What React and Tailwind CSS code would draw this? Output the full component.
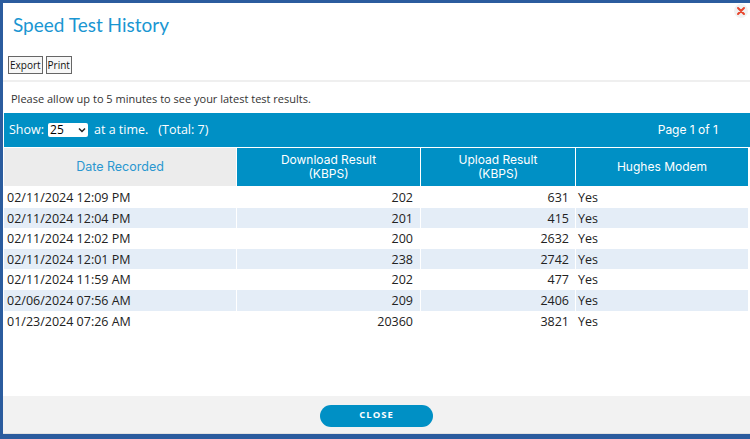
import React from "react";

const rows = [
  ["02/11/2024 12:09 PM", "202", "631", "Yes"],
  ["02/11/2024 12:04 PM", "201", "415", "Yes"],
  ["02/11/2024 12:02 PM", "200", "2632", "Yes"],
  ["02/11/2024 12:01 PM", "238", "2742", "Yes"],
  ["02/11/2024 11:59 AM", "202", "477", "Yes"],
  ["02/06/2024 07:56 AM", "209", "2406", "Yes"],
  ["01/23/2024 07:26 AM", "20360", "3821", "Yes"],
];

const head = { fontFamily: "Inter, 'Open Sans', sans-serif" };

export default function App() {
  return (
    <div
      className="w-[750px] h-[439px] bg-[#2b5c9e] pt-[3px] pl-[3px] pb-[5px] overflow-hidden"
      style={{ fontFamily: "'Open Sans', sans-serif" }}
    >
      <div className="relative h-full bg-white flex flex-col">
        <button className="absolute right-[2px] top-[1px] w-[14px] h-[14px] rounded-full bg-[#f1f1f1] flex items-center justify-center">
          <svg width="10" height="10" viewBox="0 0 10 10">
            <path d="M2 2L8 8M8 2L2 8" stroke="#e8452c" strokeWidth="2" strokeLinecap="round" />
          </svg>
        </button>
        <div className="h-[79px] border-b-2 border-[#efefef] flex flex-col">
          <h1
            className="pl-[10px] pt-[9px] text-[19px] leading-[26px] text-[#1a96d2] font-normal"
            style={{ fontFamily: "Lato, 'Open Sans', sans-serif" }}
          >
            Speed Test History
          </h1>
          <div className="flex gap-[3px] pl-[5px] mt-[18px]">
            <button className="h-[18px] px-px border border-[#666] bg-[#f7f7f7] text-[10px] leading-[16px] text-[#111]">
              Export
            </button>
            <button className="h-[18px] px-px border border-[#666] bg-[#f7f7f7] text-[10px] leading-[16px] text-[#111]">
              Print
            </button>
          </div>
        </div>
        <p className="pl-[8px] pt-[8px] text-[11px] leading-[17px] text-[#333]">
          Please allow up to 5 minutes to see your latest test results.
        </p>
        <div className="mt-[6px] ml-[1px] h-[34px] bg-[#0090c5] flex items-center justify-between pl-[5px] pr-[32px] text-white text-[12.5px]">
          <div className="flex items-center">
            <span>Show:</span>
            <div className="ml-[4px] w-[40px] h-[14px] bg-white rounded-[2px] flex items-center justify-between px-[2px] text-black text-[12px] leading-[14px]">
              <span>25</span>
              <svg width="8" height="6" viewBox="0 0 8 6">
                <path d="M1 1.5L4 4.5L7 1.5" fill="none" stroke="#222" strokeWidth="1.5" />
              </svg>
            </div>
            <span className="ml-[6px]">at a time.</span>
            <span className="ml-[10px]">(Total: 7)</span>
          </div>
          <span style={head} className="text-[12px]">Page 1 of 1</span>
        </div>
        <div className="mt-px ml-px grid grid-cols-[232px_183px_154px_172px] gap-x-px">
          <div className="h-[38px] bg-[#ececec] flex items-center justify-center text-[12.5px] text-[#2a97d0]" style={head}>
            Date Recorded
          </div>
          <div className="h-[38px] bg-[#0090c5] flex flex-col items-center justify-center text-[12px] leading-[14px] text-white" style={head}>
            <span>Download Result</span>
            <span>(KBPS)</span>
          </div>
          <div className="h-[38px] bg-[#0090c5] flex flex-col items-center justify-center text-[12px] leading-[14px] text-white" style={head}>
            <span>Upload Result</span>
            <span>(KBPS)</span>
          </div>
          <div className="h-[38px] bg-[#0090c5] flex items-center justify-center text-[12px] text-white" style={head}>
            Hughes Modem
          </div>
        </div>
        <div className="mt-px ml-px grid grid-cols-[232px_183px_154px_172px] gap-x-px text-[12.5px] text-[#222]">
          {rows.map((r, i) => {
            const bg = i % 2 === 1 ? "bg-[#e4edf7]" : "bg-white";
            return (
              <React.Fragment key={i}>
                <div className={`${bg} h-[20.6px] leading-[21px] pl-[3px]`}>{r[0]}</div>
                <div className={`${bg} h-[20.6px] leading-[21px] pr-[7px] text-right`}>{r[1]}</div>
                <div className={`${bg} h-[20.6px] leading-[21px] pr-[6px] text-right`}>{r[2]}</div>
                <div className={`${bg} h-[20.6px] leading-[21px] pl-[2px]`}>{r[3]}</div>
              </React.Fragment>
            );
          })}
        </div>
        <div className="mt-auto h-[38px] bg-[#f2f2f2] border-b border-[#e2e2e2] flex items-center justify-center pt-[2px]">
          <button className="w-[113px] h-[22px] rounded-full bg-[#0090c5] text-white text-[9.5px] font-bold tracking-[1px]">
            CLOSE
          </button>
        </div>
      </div>
    </div>
  );
}
